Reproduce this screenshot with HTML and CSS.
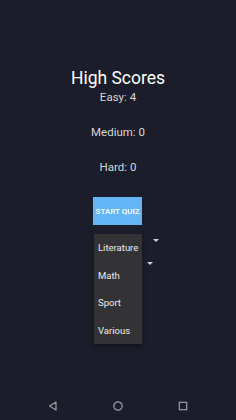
FILE: index.html
```html
<!DOCTYPE html>
<html lang="en">
<head>
    <meta charset="UTF-8">
    <meta name="viewport" content="width=device-width, initial-scale=1.0">
    <title>High Scores</title>
    <link rel="stylesheet" href="styles.css">
</head>
<body>
    <div class="screen">
        <div class="content">
            <h1 class="title">High Scores</h1>
            <p class="score first">Easy: 4</p>
            <p class="score">Medium: 0</p>
            <p class="score">Hard: 0</p>

            <button class="start-btn">START QUIZ</button>

            <div class="picker">
                <ul class="menu">
                    <li>Literature</li>
                    <li>Math</li>
                    <li>Sport</li>
                    <li>Various</li>
                </ul>
                <span class="arrow arrow-one"></span>
                <span class="arrow arrow-two"></span>
            </div>
        </div>

        <div class="nav-bar">
            <svg width="10" height="10" viewBox="0 0 10 10">
                <path d="M8 1 L1.5 5 L8 9 Z" fill="none" stroke="#9a9ca6" stroke-width="1.2" stroke-linejoin="round"/>
            </svg>
            <svg width="10" height="10" viewBox="0 0 10 10">
                <circle cx="5" cy="5" r="4.2" fill="none" stroke="#9a9ca6" stroke-width="1.2"/>
            </svg>
            <svg width="10" height="10" viewBox="0 0 10 10">
                <rect x="1.3" y="1.3" width="7.4" height="7.4" fill="none" stroke="#9a9ca6" stroke-width="1.2"/>
            </svg>
        </div>
    </div>
</body>
</html>
```

FILE: styles.css
```css
* {
    margin: 0;
    padding: 0;
    box-sizing: border-box;
}

body {
    font-family: Roboto, "Noto Sans", sans-serif;
    background-color: #1b1d2a;
    width: 236px;
    height: 420px;
    overflow: hidden;
}

.screen {
    height: 420px;
    display: flex;
    flex-direction: column;
}

.content {
    flex: 1;
    display: flex;
    flex-direction: column;
    align-items: center;
    padding-top: 67px;
}

.title {
    color: #ffffff;
    font-size: 17.5px;
    font-weight: 400;
    line-height: 23px;
}

.score {
    color: #d6d7dc;
    font-size: 11.5px;
    line-height: 14px;
    margin-top: 21px;
}

.score.first {
    margin-top: 0;
}

.start-btn {
    margin-top: 23px;
    margin-left: -1px;
    width: 49px;
    height: 28px;
    background-color: #64b5f6;
    color: #ffffff;
    border: none;
    font-family: inherit;
    font-size: 8px;
    font-weight: 500;
    white-space: nowrap;
}

.picker {
    position: relative;
    margin-top: 9px;
    width: 49px;
    margin-left: 1px;
}

.menu {
    list-style: none;
    width: 48px;
    height: 110px;
    background-color: #333336;
    box-shadow: 0 2px 4px rgba(0, 0, 0, 0.4);
    padding-top: 7px;
}

.menu li {
    color: #ececec;
    font-size: 9.5px;
    height: 27.5px;
    line-height: 14px;
    padding-left: 4px;
}

/* little spinner arrows beside the menu */
.arrow {
    position: absolute;
    width: 0;
    height: 0;
    border-left: 3px solid transparent;
    border-right: 3px solid transparent;
    border-top: 3px solid #d0d1d6;
}

.arrow-one {
    left: 59px;
    top: 5px;
}

.arrow-two {
    left: 53px;
    top: 28px;
}

.nav-bar {
    height: 28px;
    display: flex;
    justify-content: space-between;
    align-items: center;
    padding: 0 48px 0 48px;
}
```
